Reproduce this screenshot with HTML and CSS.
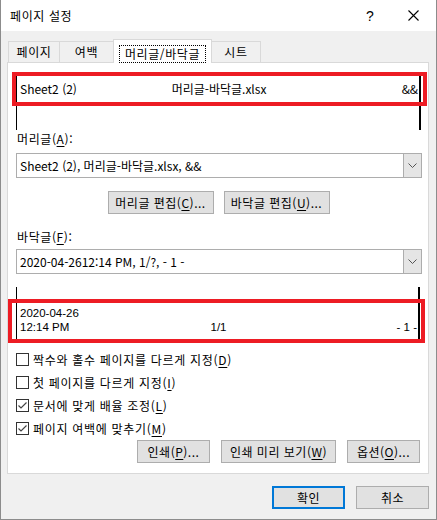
FILE: index.html
```html
<!DOCTYPE html>
<html lang="ko">
<head>
<meta charset="UTF-8">
<title>페이지 설정</title>
<link rel="stylesheet" href="styles.css">
</head>
<body>
<div class="window">
  <div class="titlebar">
    <span class="title">페이지 설정</span>
    <span class="help">?</span>
    <svg class="close" width="11" height="11" viewBox="0 0 11 11">
      <path d="M0.5 0.5 L10.5 10.5 M10.5 0.5 L0.5 10.5" stroke="#000" stroke-width="1.1" fill="none"/>
    </svg>
  </div>

  <div class="tabs">
    <div class="tab tab-page">페이지</div>
    <div class="tab tab-margin">여백</div>
    <div class="tab tab-active"><span class="focus">머리글/바닥글</span></div>
    <div class="tab tab-sheet">시트</div>
  </div>

  <div class="panel">
    <div class="preview preview-header">
      <span>Sheet2 (2)</span>
      <span>머리글-바닥글.xlsx</span>
      <span class="right">&amp;&amp;</span>
    </div>

    <div class="label">머리글(<u>A</u>):</div>
    <div class="combo">
      <span class="combo-text">Sheet2 (2), 머리글-바닥글.xlsx, &amp;&amp;</span>
      <span class="combo-btn">
        <svg width="9" height="5" viewBox="0 0 9 5"><path d="M0.5 0.5 L4.5 4.5 L8.5 0.5" stroke="#555" fill="none"/></svg>
      </span>
    </div>

    <div class="edit-row">
      <div class="btn btn-edit">머리글 편집(<u>C</u>)...</div>
      <div class="btn btn-edit">바닥글 편집(<u>U</u>)...</div>
    </div>

    <div class="label label-footer">바닥글(<u>F</u>):</div>
    <div class="combo combo-footer">
      <span class="combo-text">2020-04-2612:14 PM, 1/?, - 1 -</span>
      <span class="combo-btn">
        <svg width="9" height="5" viewBox="0 0 9 5"><path d="M0.5 0.5 L4.5 4.5 L8.5 0.5" stroke="#555" fill="none"/></svg>
      </span>
    </div>

    <div class="preview preview-footer">
      <span>2020-04-26<br>12:14 PM</span>
      <span>1/1</span>
      <span class="right">- 1 -</span>
    </div>

    <div class="checklist">
      <div class="check-row">
        <span class="box"></span>
        <span>짝수와 홀수 페이지를 다르게 지정(<u>D</u>)</span>
      </div>
      <div class="check-row">
        <span class="box"></span>
        <span>첫 페이지를 다르게 지정(<u>I</u>)</span>
      </div>
      <div class="check-row">
        <span class="box checked">
          <svg width="11" height="11" viewBox="0 0 11 11"><path d="M1.5 5.5 L4 8 L9.5 2.5" stroke="#444" stroke-width="1.2" fill="none"/></svg>
        </span>
        <span>문서에 맞게 배율 조정(<u>L</u>)</span>
      </div>
      <div class="check-row">
        <span class="box checked">
          <svg width="11" height="11" viewBox="0 0 11 11"><path d="M1.5 5.5 L4 8 L9.5 2.5" stroke="#444" stroke-width="1.2" fill="none"/></svg>
        </span>
        <span>페이지 여백에 맞추기(<u>M</u>)</span>
      </div>
    </div>

    <div class="print-row">
      <div class="btn btn-small">인쇄(<u>P</u>)...</div>
      <div class="btn btn-wide">인쇄 미리 보기(<u>W</u>)</div>
      <div class="btn btn-small">옵션(<u>O</u>)...</div>
    </div>

    <!-- 빨간 표시 상자 -->
    <div class="mark mark-header"></div>
    <div class="mark mark-footer"></div>
  </div>

  <div class="dialog-row">
    <div class="btn btn-small btn-default">확인</div>
    <div class="btn btn-small">취소</div>
  </div>
</div>
</body>
</html>
```

FILE: styles.css
```css
* {
  box-sizing: border-box;
}
body {
  margin: 0;
  font-family: "Noto Sans CJK KR", "Liberation Sans", sans-serif;
  font-size: 12px;
  color: #000;
  background: #fff;
}
u {
  text-decoration-thickness: 1px;
  text-underline-offset: 2px;
}
.window {
  width: 437px;
  height: 520px;
  background: #f0f0f0;
  border: 1px solid #8c8c8c;
  border-top: none;
  display: flex;
  flex-direction: column;
}
.titlebar {
  height: 31px;
  background: #fff;
  display: flex;
  align-items: center;
  padding-left: 9px;
}
.title {
  line-height: 16px;
  letter-spacing: 0.6px;
}
.help {
  margin-left: auto;
  width: 8px;
  font-size: 14px;
  font-family: "Liberation Sans", sans-serif;
  margin-right: 34px;
}
.close {
  margin-right: 17px;
}
.tabs {
  margin-top: 8px;
  height: 23px;
  padding-left: 7px;
  display: flex;
  align-items: flex-end;
}
.tab {
  height: 21px;
  line-height: 20px;
  text-align: center;
  background: #f0f0f0;
  border: 1px solid #d9d9d9;
  border-bottom: none;
  letter-spacing: 0.6px;
}
.tab-page {
  width: 52px;
}
.tab-margin {
  width: 53px;
  border-left: none;
  border-right: none;
}
.tab-active {
  width: 99px;
  height: 24px;
  margin-bottom: -1px;
  background: #fff;
  position: relative;
  z-index: 1;
  padding-top: 4px;
}
.tab-active .focus {
  display: inline-block;
  border: 1px dotted #000;
  width: 87px;
  height: 18px;
  line-height: 15px;
}
.tab-sheet {
  width: 49px;
  border-left: none;
}
.panel {
  height: 412px;
  margin: 0 7px 0 6px;
  background: #fff;
  border: 1px solid #d9d9d9;
  position: relative;
  display: flex;
  flex-direction: column;
}
.preview {
  display: grid;
  grid-template-columns: 1fr auto 1fr;
  border: 0 solid #000;
  margin-left: 8px;
}
.preview .right {
  justify-self: end;
}
.preview-header {
  margin-top: 10px;
  margin-right: 7px;
  height: 57px;
  border-top-width: 2px;
  border-left-width: 1px;
  border-right-width: 2px;
  padding: 6px 1px 0 3px;
  line-height: 16px;
}
.preview-footer {
  margin-top: 13px;
  margin-right: 8px;
  height: 55px;
  border-bottom-width: 2px;
  border-left-width: 1px;
  border-right-width: 2px;
  padding: 0 1px 6px 3px;
  font-family: "Liberation Sans", sans-serif;
  font-size: 11.5px;
  line-height: 14px;
  align-items: end;
}
.label {
  margin-top: 1px;
  padding-left: 9px;
  line-height: 16px;
  letter-spacing: 0.6px;
}
.label-footer {
  margin-top: 15px;
}
.combo {
  margin: 6px 6px 0 8px;
  height: 25px;
  border: 1px solid #adadad;
  display: flex;
  align-items: center;
}
.combo-footer {
  margin-top: 4px;
}
.combo-text {
  flex: 1;
  padding-left: 3px;
}
.combo-btn {
  width: 18px;
  height: 100%;
  background: #e5e5e5;
  border-left: 1px solid #adadad;
  display: flex;
  align-items: center;
  justify-content: center;
}
.btn {
  height: 23px;
  line-height: 21px;
  text-align: center;
  background: #e1e1e1;
  border: 1px solid #adadad;
  letter-spacing: 0.5px;
}
.btn-default {
  border: 2px solid #0078d7;
  line-height: 19px;
}
.edit-row {
  margin-top: 13px;
  display: flex;
  justify-content: center;
  gap: 10px;
  padding-left: 1px;
}
.btn-edit {
  width: 106px;
}
.checklist {
  margin-top: 6px;
  padding-left: 8px;
}
.check-row {
  height: 23px;
  display: flex;
  align-items: center;
  gap: 4px;
  letter-spacing: 0.7px;
}
.box {
  width: 13px;
  height: 13px;
  border: 1px solid #333;
  display: flex;
  align-items: center;
  justify-content: center;
}
.print-row {
  display: flex;
  justify-content: flex-end;
  gap: 11px;
  margin-right: 8px;
}
.btn-small {
  width: 73px;
}
.btn-wide {
  width: 115px;
}
.dialog-row {
  margin-top: 12px;
  margin-right: 7px;
  display: flex;
  justify-content: flex-end;
  gap: 11px;
}
.mark {
  position: absolute;
  border: 4px solid #ed1c24;
}
.mark-header {
  left: 4px;
  top: 9px;
  width: 415px;
  height: 34px;
}
.mark-footer {
  left: 0;
  top: 236px;
  width: 417px;
  height: 44px;
}
```
